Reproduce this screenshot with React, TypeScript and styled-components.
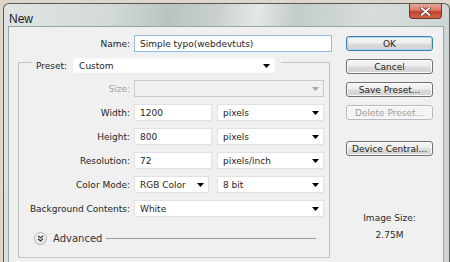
import React from "react";
import styled, { createGlobalStyle } from "styled-components";

const GlobalStyle = createGlobalStyle`
  html, body { margin: 0; padding: 0; }
  body {
    width: 450px;
    height: 262px;
    overflow: hidden;
    background: #ddd6c9;
    font-family: "DejaVu Sans", Tahoma, sans-serif;
    font-size: 9px;
    color: #1e1e1e;
  }
`;

const Window = styled.div`
  margin: 3px 0 0 3px;
  width: 447px;
  height: 259px;
  box-sizing: border-box;
  border: 1px solid #545a57;
  border-bottom: none;
  border-radius: 6px 6px 0 0;
  padding: 0 5px 0 4px;
  display: flex;
  flex-direction: column;
  background: linear-gradient(
    100deg,
    #dfe5e3 0%,
    #d2dad8 22%,
    #b9c4c2 34%,
    #c9d1cf 44%,
    #e3e8e6 52%,
    #c2ccca 60%,
    #d6dddb 74%,
    #cbd4d2 100%
  );
`;

const TitleBar = styled.div`
  height: 22px;
  flex: none;
  display: flex;
  align-items: flex-start;
  justify-content: space-between;
`;

const Title = styled.span`
  margin: 8px 0 0 1px;
  font-family: "Liberation Sans", Arial, sans-serif;
  font-size: 12px;
  color: #1b1b1b;
`;

const CloseButton = styled.div`
  width: 33px;
  height: 15px;
  margin-right: 2px;
  box-sizing: border-box;
  border: 1px solid #6e3328;
  border-top: none;
  border-radius: 0 0 4px 4px;
  background: linear-gradient(#e9a898 0%, #d77766 45%, #c2402c 55%, #d4644c 100%);
  display: flex;
  align-items: center;
  justify-content: center;
`;

const Client = styled.div`
  flex: 1;
  min-height: 0;
  display: flex;
  border: 1px solid #9aa3a5;
  border-bottom: none;
  background: #f0f0f0;
`;

const LeftCol = styled.div`
  width: 314px;
  padding: 8px 0 0 9px;
  display: flex;
  flex-direction: column;
`;

const RightCol = styled.div`
  width: 87px;
  margin-left: 14px;
  padding-top: 9px;
  display: flex;
  flex-direction: column;
`;

const Row = styled.div`
  display: flex;
  align-items: center;
  gap: 4px;
  height: 17px;
`;

const Label = styled.label<{ $w: number; $disabled?: boolean }>`
  width: ${({ $w }) => $w}px;
  flex: none;
  text-align: right;
  color: ${({ $disabled }) => ($disabled ? "#a3a3a3" : "#1e1e1e")};
  white-space: nowrap;
`;

const TextBox = styled.div<{ $w: number; $focus?: boolean }>`
  width: ${({ $w }) => $w}px;
  height: 17px;
  box-sizing: border-box;
  background: #fff;
  border: 1px solid ${({ $focus }) => ($focus ? "#8dbbe6" : "#e1e1e1")};
  padding-left: 5px;
  display: flex;
  align-items: center;
  white-space: nowrap;
  overflow: hidden;
`;

const Select = styled.div<{ $w: number; $h?: number; $disabled?: boolean; $plain?: boolean }>`
  width: ${({ $w }) => $w}px;
  height: ${({ $h }) => $h ?? 17}px;
  box-sizing: border-box;
  background: ${({ $disabled }) => ($disabled ? "#f1f1f1" : "#fff")};
  border: 1px solid
    ${({ $disabled, $plain }) => ($disabled ? "#cacaca" : $plain ? "#fbfbfb" : "#e1e1e1")};
  padding: 0 4px 0 5px;
  display: flex;
  align-items: center;
  justify-content: space-between;
  white-space: nowrap;
`;

const Arrow = ({ color = "#000" }: { color?: string }) => (
  <svg width="7" height="4" viewBox="0 0 7 4">
    <path d="M0 0h7L3.5 4z" fill={color} />
  </svg>
);

const Group = styled.fieldset`
  margin: 0;
  width: 312px;
  height: 206px;
  box-sizing: border-box;
  border: 1px solid #c2c2c2;
  padding: 7px 0 0 0;
  min-width: 0;
`;

const Legend = styled.legend`
  margin-left: 13px;
  padding: 6px 6px 0 4px;
  display: flex;
  align-items: center;
  gap: 6px;
`;

const Fields = styled.div`
  display: flex;
  flex-direction: column;
  gap: 7px;
`;

const Pair = styled.div`
  display: grid;
  grid-template-columns: 83px 107px;
  align-items: center;
`;

const Advanced = styled.div`
  margin-top: 15px;
  padding: 0 13px 0 15px;
  height: 13px;
  display: flex;
  align-items: center;
  gap: 6px;
  color: #333;
  font-size: 10px;
`;

const RoundToggle = styled.div`
  width: 13px;
  height: 13px;
  box-sizing: border-box;
  border-radius: 50%;
  border: 1px solid #b4b4b4;
  background: radial-gradient(circle at 40% 30%, #ffffff 0%, #e6e6e6 70%, #d6d6d6 100%);
  display: flex;
  align-items: center;
  justify-content: center;
`;

const Rule = styled.div`
  flex: 1;
  height: 1px;
  margin-left: -2px;
  background: #9c9c9c;
`;

const Buttons = styled.div`
  display: flex;
  flex-direction: column;
  gap: 8px;
`;

const Button = styled.div<{ $default?: boolean; $disabled?: boolean }>`
  height: 15px;
  box-sizing: border-box;
  border-radius: 3px;
  border: 1px solid
    ${({ $default, $disabled }) => ($default ? "#3c7fb1" : $disabled ? "#b7babc" : "#707070")};
  background: ${({ $disabled }) =>
    $disabled ? "#f4f4f4" : "linear-gradient(#f6f6f6 0%, #ececec 48%, #dcdcdc 52%, #d2d2d2 100%)"};
  box-shadow: ${({ $default }) => ($default ? "inset 0 0 0 1px #a6d8f4" : "inset 0 0 0 1px #fbfbfb")};
  color: ${({ $disabled }) => ($disabled ? "#a0a0a0" : "#1e1e1e")};
  display: flex;
  align-items: center;
  justify-content: center;
  white-space: nowrap;
`;

const DeviceButton = styled(Button)`
  margin-top: 21px;
`;

const ImageSize = styled.div`
  margin-top: 57px;
  display: flex;
  flex-direction: column;
  align-items: center;
  gap: 7px;
  color: #2a2a2a;
`;

export default function App() {
  return (
    <>
      <GlobalStyle />
      <Window>
        <TitleBar>
          <Title>New</Title>
          <CloseButton>
            <svg width="11" height="9" viewBox="0 0 11 9">
              <path
                d="M1.5 1L9.5 8M9.5 1L1.5 8"
                stroke="#5a2a22"
                strokeWidth="3.2"
                strokeLinecap="round"
              />
              <path
                d="M1.5 1L9.5 8M9.5 1L1.5 8"
                stroke="#ffffff"
                strokeWidth="1.8"
                strokeLinecap="round"
              />
            </svg>
          </CloseButton>
        </TitleBar>
        <Client>
          <LeftCol>
            <Row>
              <Label $w={112}>Name:</Label>
              <TextBox $w={198} $focus>
                Simple typo(webdevtuts)
              </TextBox>
            </Row>
            <Group>
              <Legend>
                <span>Preset:</span>
                <Select $w={202} $h={15} $plain>
                  Custom <Arrow />
                </Select>
              </Legend>
              <Fields>
                <Row>
                  <Label $w={111} $disabled>
                    Size:
                  </Label>
                  <Select $w={190} $disabled>
                    <span />
                    <Arrow color="#a8a8a8" />
                  </Select>
                </Row>
                <Row>
                  <Label $w={111}>Width:</Label>
                  <Pair>
                    <TextBox $w={78}>1200</TextBox>
                    <Select $w={107}>
                      pixels <Arrow />
                    </Select>
                  </Pair>
                </Row>
                <Row>
                  <Label $w={111}>Height:</Label>
                  <Pair>
                    <TextBox $w={78}>800</TextBox>
                    <Select $w={107}>
                      pixels <Arrow />
                    </Select>
                  </Pair>
                </Row>
                <Row>
                  <Label $w={111}>Resolution:</Label>
                  <Pair>
                    <TextBox $w={78}>72</TextBox>
                    <Select $w={107}>
                      pixels/inch <Arrow />
                    </Select>
                  </Pair>
                </Row>
                <Row>
                  <Label $w={111}>Color Mode:</Label>
                  <Pair>
                    <Select $w={75}>
                      RGB Color <Arrow />
                    </Select>
                    <Select $w={107}>
                      8 bit <Arrow />
                    </Select>
                  </Pair>
                </Row>
                <Row>
                  <Label $w={111}>Background Contents:</Label>
                  <Select $w={190}>
                    White <Arrow />
                  </Select>
                </Row>
              </Fields>
              <Advanced>
                <RoundToggle>
                  <svg width="7" height="7" viewBox="0 0 7 7">
                    <path
                      d="M1 0.8L3.5 3L6 0.8M1 3.8L3.5 6L6 3.8"
                      stroke="#333"
                      strokeWidth="1.2"
                      fill="none"
                    />
                  </svg>
                </RoundToggle>
                <span>Advanced</span>
                <Rule />
              </Advanced>
            </Group>
          </LeftCol>
          <RightCol>
            <Buttons>
              <Button $default>OK</Button>
              <Button>Cancel</Button>
              <Button>Save Preset...</Button>
              <Button $disabled>Delete Preset...</Button>
            </Buttons>
            <DeviceButton>Device Central...</DeviceButton>
            <ImageSize>
              <span>Image Size:</span>
              <span>2.75M</span>
            </ImageSize>
          </RightCol>
        </Client>
      </Window>
    </>
  );
}
